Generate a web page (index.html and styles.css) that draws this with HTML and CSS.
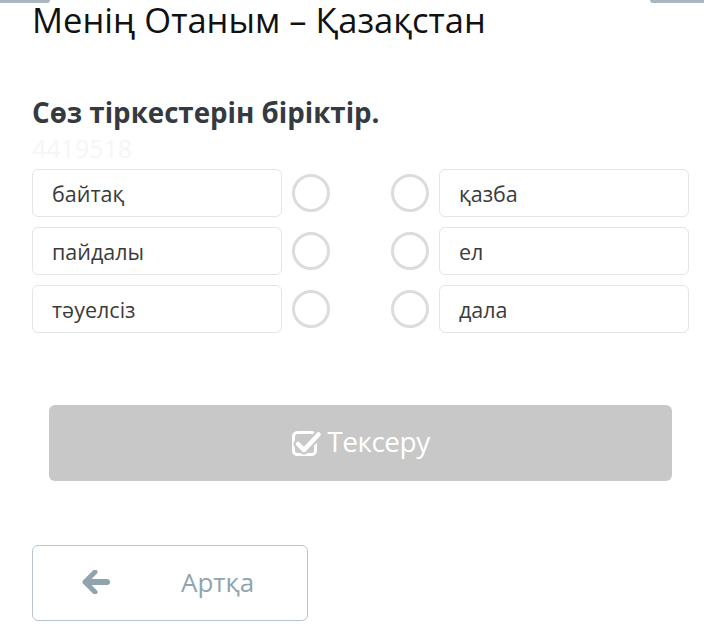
FILE: index.html
```html
<!DOCTYPE html>
<html lang="kk">
<head>
<meta charset="utf-8">
<title>Менің Отаным – Қазақстан</title>
<link rel="stylesheet" href="styles.css">
</head>
<body>
<div class="topbars"><span class="tb tb-left"></span><span class="tb tb-right"></span></div>
<main class="page">
  <h1 class="title">Менің Отаным – Қазақстан</h1>
  <h2 class="question">Сөз тіркестерін біріктір.</h2>
  <div class="qid">4419518</div>
  <div class="match">
    <div class="col">
      <div class="row"><div class="item">байтақ</div><span class="dot"></span></div>
      <div class="row"><div class="item">пайдалы</div><span class="dot"></span></div>
      <div class="row"><div class="item">тәуелсіз</div><span class="dot"></span></div>
    </div>
    <div class="col">
      <div class="row"><span class="dot"></span><div class="item">қазба</div></div>
      <div class="row"><span class="dot"></span><div class="item">ел</div></div>
      <div class="row"><span class="dot"></span><div class="item">дала</div></div>
    </div>
  </div>
  <button class="check" type="button">
    <svg class="check-ico" width="31" height="30" viewBox="0 0 31 30" aria-hidden="true">
      <rect x="2.5" y="5.5" width="22" height="22" rx="4" fill="none" stroke="#fff" stroke-width="3"/>
      <path d="M7 17 L13 23 L27.5 7.5" fill="none" stroke="#c8c8c8" stroke-width="9" stroke-linecap="round" stroke-linejoin="round"/>
      <path d="M7 17 L13 23 L27.5 7.5" fill="none" stroke="#fff" stroke-width="4.5" stroke-linecap="round" stroke-linejoin="round"/>
    </svg>
    <span>Тексеру</span>
  </button>
  <button class="back" type="button">
    <svg class="back-ico" width="28" height="24" viewBox="0 0 28 24" aria-hidden="true">
      <path d="M13 2 L3 12 L13 22" fill="none" stroke="#90a4ae" stroke-width="5" stroke-linecap="round" stroke-linejoin="round"/>
      <path d="M4 12 H25" fill="none" stroke="#90a4ae" stroke-width="6" stroke-linecap="round"/>
    </svg>
    <span>Артқа</span>
  </button>
</main>
</body>
</html>
```
FILE: styles.css
```css
html, body {
  margin: 0;
  padding: 0;
  background: #fff;
}
body {
  font-family: "Open Sans", "Noto Sans", sans-serif;
  width: 704px;
  height: 634px;
  overflow: hidden;
  position: relative;
}
.topbars {
  display: flex;
  justify-content: space-between;
  height: 0;
}
.tb {
  display: block;
  height: 3px;
  background: #a9b6bd;
}
.tb-left { width: 50px; border-bottom-right-radius: 3px; }
.tb-right { width: 54px; border-bottom-left-radius: 3px; }
.page {
  padding: 0 15px 0 32px;
}
.title {
  margin: 0;
  padding-top: 1px;
  font-weight: 400;
  font-size: 34.5px;
  line-height: 38px;
  color: #111;
  letter-spacing: 0;
}
.question {
  margin: 57px 0 0;
  font-weight: 700;
  font-size: 27.7px;
  line-height: 32px;
  color: #343a40;
}
.qid {
  font-size: 25px;
  line-height: 30px;
  color: #f6f6f6;
  margin-top: 5px;
}
.match {
  display: flex;
  margin-top: 6px;
  width: 657px;
  justify-content: space-between;
}
.col {
  display: flex;
  flex-direction: column;
  gap: 10px;
}
.row {
  display: flex;
  align-items: center;
  gap: 10px;
}
.item {
  box-sizing: border-box;
  width: 250px;
  height: 48px;
  border: 1px solid #e2e6e9;
  border-radius: 6px;
  padding-left: 19px;
  display: flex;
  align-items: center;
  font-size: 21.5px;
  color: #3b3b3b;
}
.dot {
  box-sizing: border-box;
  width: 38px;
  height: 38px;
  border: 3px solid #dcdcdc;
  border-radius: 50%;
}
.check {
  display: flex;
  align-items: center;
  justify-content: center;
  gap: 5px;
  box-sizing: border-box;
  margin: 72px 0 0 17px;
  width: 623px;
  height: 76px;
  border: none;
  border-radius: 6px;
  background: #c8c8c8;
  color: #fff;
  font-family: "Open Sans", "Noto Sans", sans-serif;
  font-size: 28px;
  letter-spacing: -0.5px;
  padding: 0 0 4px;
}
.check-ico { margin-top: 2px; }
.back {
  display: flex;
  align-items: center;
  box-sizing: border-box;
  margin-top: 64px;
  width: 276px;
  height: 76px;
  border: 1px solid #b8c4c9;
  border-radius: 6px;
  background: #fff;
  color: #90a4ae;
  font-family: "Open Sans", "Noto Sans", sans-serif;
  font-size: 26px;
  padding: 0 0 2px 49px;
}
.back-ico { margin-right: 71px; }
```
